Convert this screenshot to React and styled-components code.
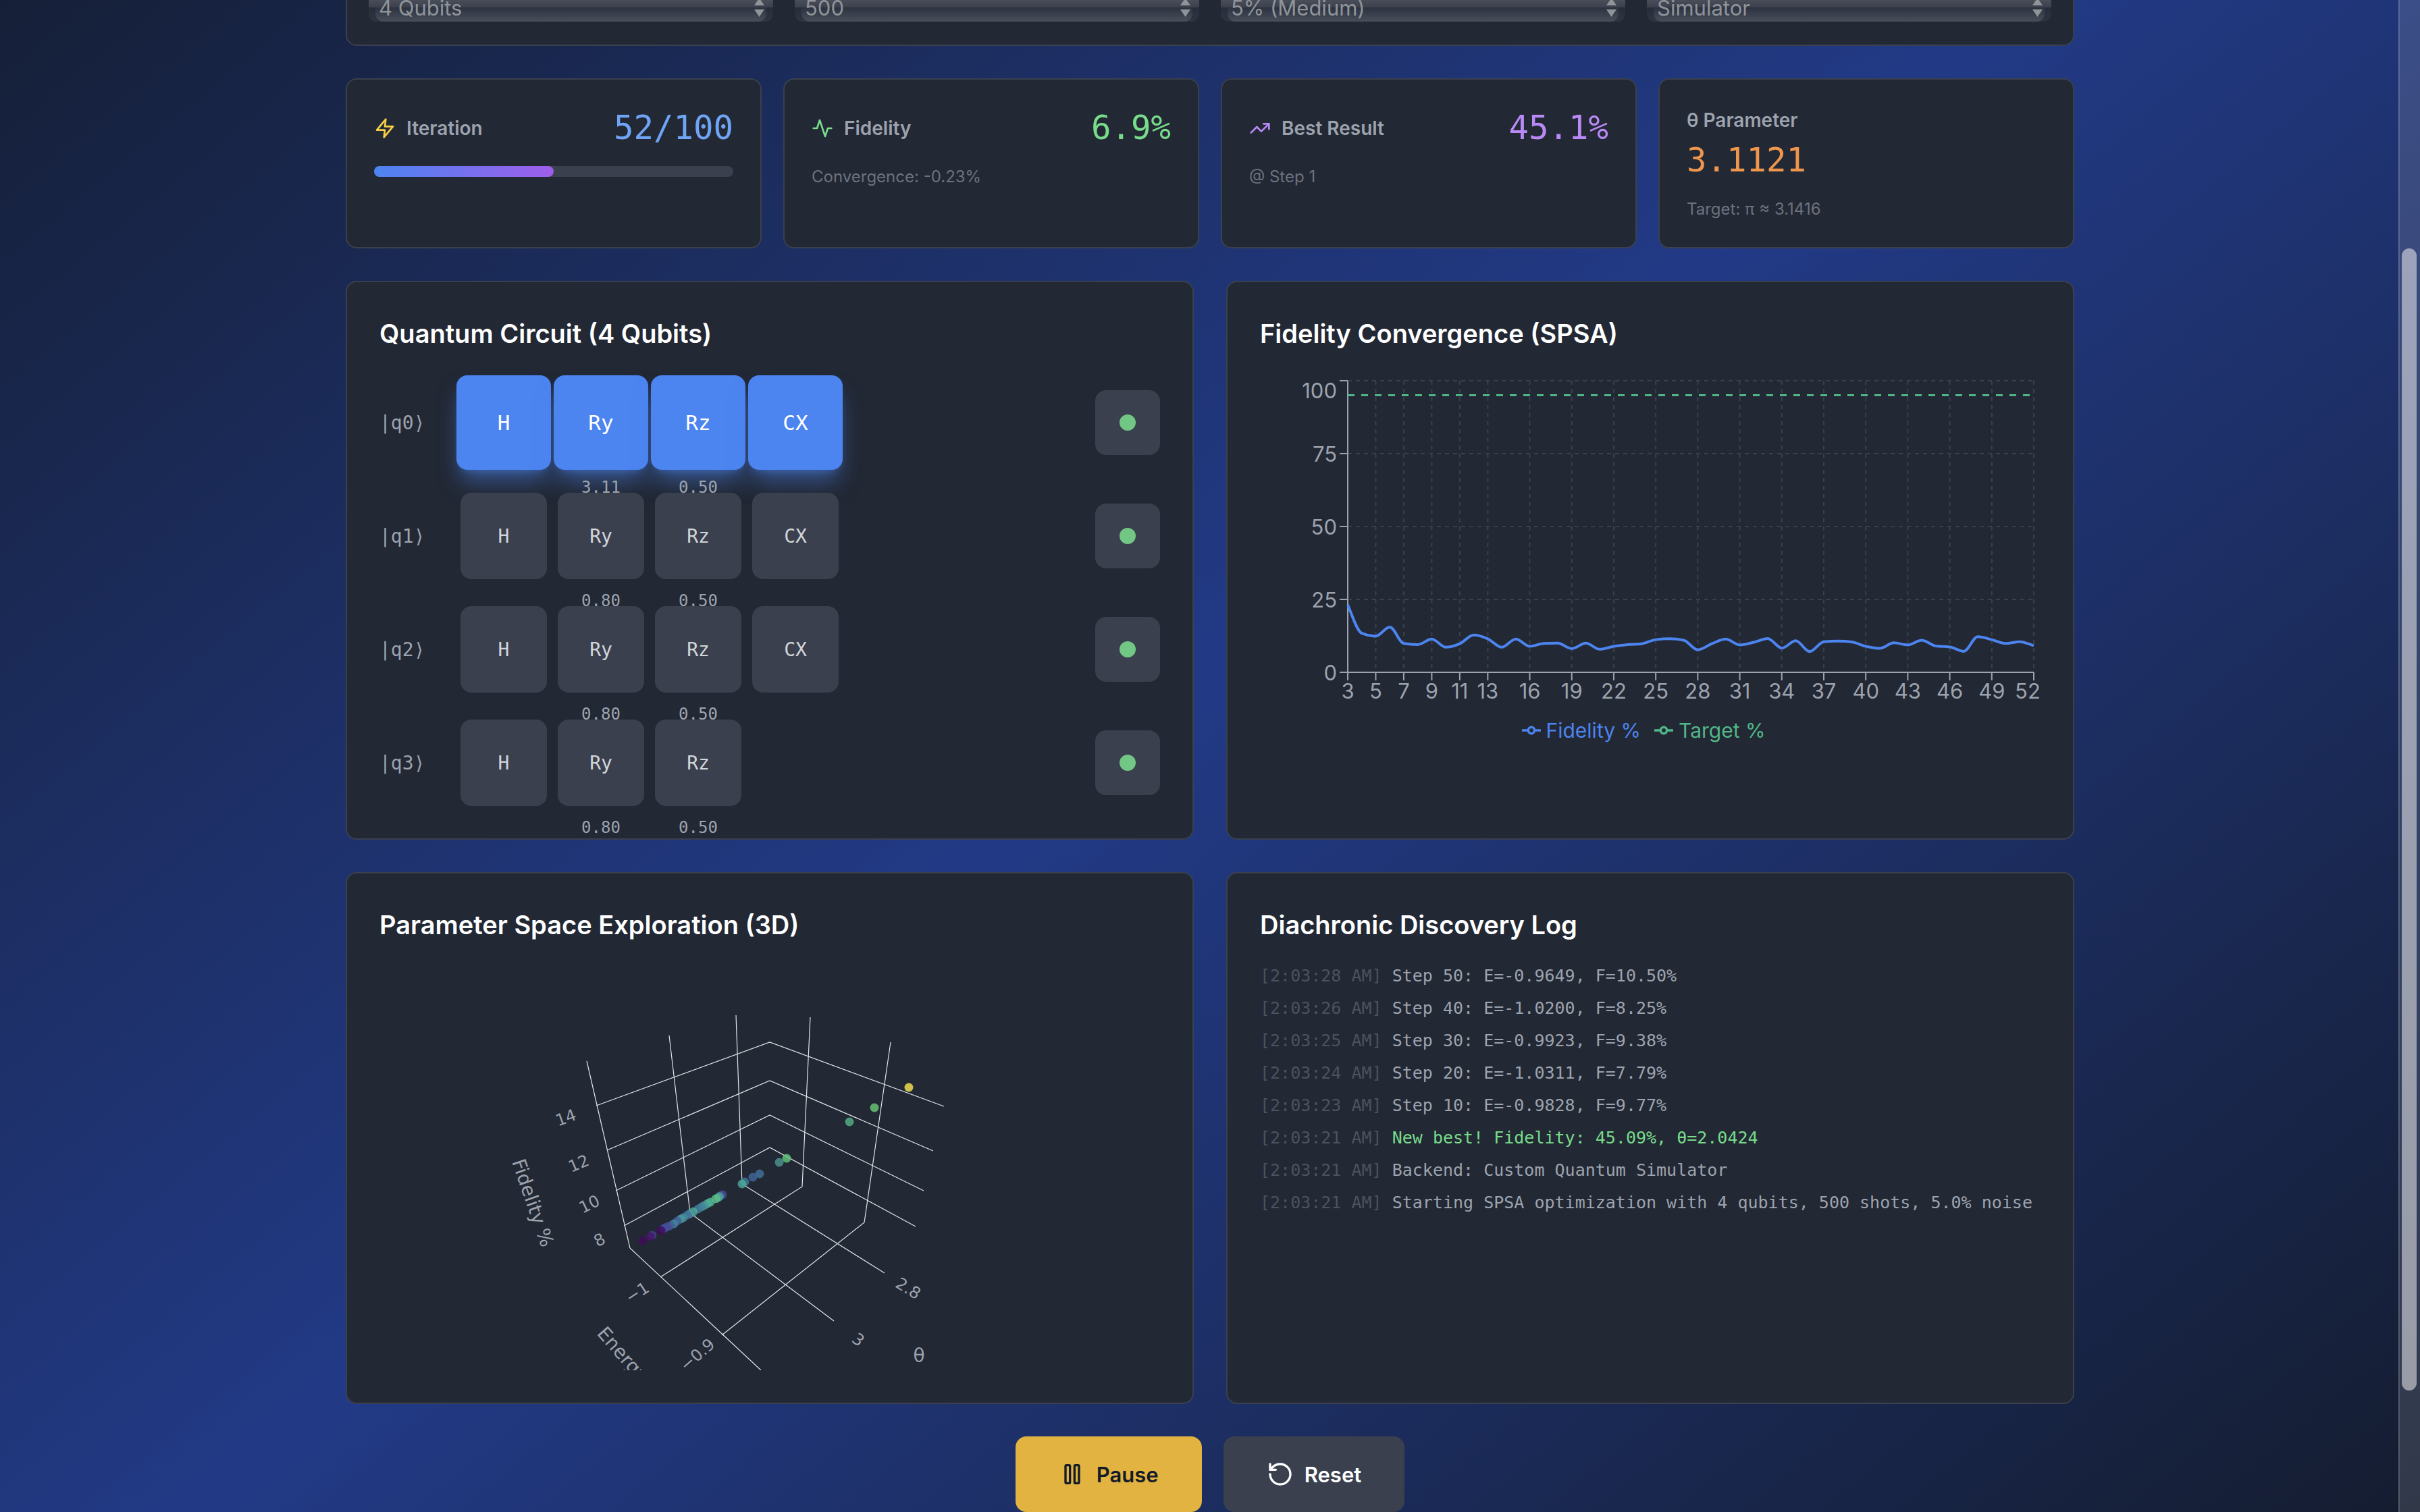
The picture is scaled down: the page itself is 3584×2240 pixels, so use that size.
import React, { useState } from "react";

import styled, { createGlobalStyle } from "styled-components";

const sans = `Inter, "Liberation Sans", sans-serif`;
const mono = `"DejaVu Sans Mono", "Liberation Mono", monospace`;

const GlobalStyle = createGlobalStyle`
  * {
    box-sizing: border-box;
  }

  body {
    margin: 0;
    font-family: ${sans};
    background: #131a2a;
  }
`;

const Page = styled.div`
  min-height: 100vh;
  overflow: hidden;
  background: linear-gradient(to bottom right, #131a28, #223a86, #131a28) 0 -490px / 100% 2966px no-repeat;
`;

const Main = styled.main`
  display: flex;
  flex-direction: column;
  gap: 48px;
  max-width: 2560px;
  margin: -46px auto 0;
`;

const Card = styled.section`
  border: 2px solid #3a404d;
  border-radius: 16px;
  background: #222834;
`;

const ConfigCard = styled(Card)`
  display: grid;
  grid-template-columns: repeat(4, 1fr);
  gap: 32px;
  padding: 34px 32px;
`;

const SelectFrame = styled.div`
  position: relative;
  height: 42px;
  padding: 0 10px;
  border-radius: 12px;
  background: linear-gradient(#555a65, #3b404c 50%, #262c39 50%, #2f3542);
`;

const Select = styled.select`
  appearance: none;
  display: block;
  width: 100%;
  height: 42px;
  padding: 0 5px;
  border: none;
  border-radius: 0 0 12px 12px;
  background: linear-gradient(#2b3240, #4a4f5a) bottom / 100% 21px no-repeat;
  color: #8f9499;
  font-family: ${sans};
  font-size: 31px;
`;

const SelectArrows = styled.svg`
  position: absolute;
  top: 6px;
  right: 13px;
  pointer-events: none;
`;

const StatGrid = styled.div`
  display: grid;
  grid-template-columns: repeat(4, 1fr);
  gap: 32px;
`;

const StatCard = styled(Card)`
  padding: 40px;
`;

const StatHeader = styled.div`
  display: flex;
  align-items: center;
  justify-content: space-between;
`;

const StatName = styled.div`
  display: flex;
  align-items: center;
  gap: 16px;
`;

const StatLabel = styled.span`
  color: #9da3ae;
  font-size: 28px;
  font-weight: 600;
  line-height: 40px;
`;

const StatValue = styled.div`
  margin-top: ${(props) => (props.$below ? "8px" : "0")};
  color: ${(props) => props.$color};
  font-family: ${mono};
  font-size: 49px;
  line-height: 64px;
`;

const StatNote = styled.div`
  margin-top: 24px;
  color: #6d727f;
  font-size: 24px;
  line-height: 32px;
`;

const ProgressTrack = styled.div`
  height: 16px;
  margin-top: 24px;
  border-radius: 8px;
  background: #3a404e;
`;

const ProgressFill = styled.div`
  height: 100%;
  border-radius: 8px;
  background: linear-gradient(to right, #4c84f0, #9f5eec);
`;

const PanelGrid = styled.div`
  display: grid;
  grid-template-columns: repeat(2, 1fr);
  gap: 48px;
`;

const Panel = styled(Card)`
  padding: 48px;
`;

const PanelTitle = styled.h2`
  margin: 0 0 32px;
  color: #ffffff;
  font-size: 38px;
  font-weight: 600;
  line-height: 56px;
`;

const Circuit = styled.div`
  display: flex;
  flex-direction: column;
  gap: 40px;
  padding-top: 8px;
`;

const QubitRow = styled.div`
  display: flex;
  align-items: center;
  height: 128px;
`;

const QubitName = styled.span`
  width: 120px;
  color: #9da3ae;
  font-family: ${mono};
  font-size: 28px;
`;

const GateList = styled.div`
  display: flex;
  flex: 1;
  gap: 16px;
`;

const GateSlot = styled.div`
  position: relative;
  width: 128px;
  height: 128px;
`;

const Gate = styled.div`
  display: flex;
  align-items: center;
  justify-content: center;
  width: ${(props) => (props.$active ? "140px" : "128px")};
  height: ${(props) => (props.$active ? "140px" : "128px")};
  margin: ${(props) => (props.$active ? "-6px" : "0")};
  border-radius: 16px;
  background: ${(props) => (props.$active ? "#4c84f0" : "#3a404e")};
  box-shadow: ${(props) =>
    props.$active
      ? "0 22px 33px -6px rgba(76, 132, 240, 0.5), 0 8px 13px -8px rgba(76, 132, 240, 0.5)"
      : "none"};
  color: ${(props) => (props.$active ? "#ffffff" : "#d2d5da")};
  font-family: ${mono};
  font-size: ${(props) => (props.$active ? "31px" : "28px")};
`;

const GateAngle = styled.span`
  position: absolute;
  bottom: -48px;
  left: 0;
  width: 100%;
  color: #9da3ae;
  font-family: ${mono};
  font-size: 24px;
  line-height: 32px;
  text-align: center;
`;

const Measure = styled.div`
  display: flex;
  align-items: center;
  justify-content: center;
  width: 96px;
  height: 96px;
  border-radius: 16px;
  background: #3a404e;
`;

const MeasureDot = styled.span`
  width: 24px;
  height: 24px;
  border-radius: 50%;
  background: #72c784;
`;

const Drawing = styled.svg`
  display: block;
  width: 100%;
  height: auto;
`;

const Legend = styled.ul`
  display: flex;
  justify-content: center;
  gap: 20px;
  margin: 0;
  padding: 2px 30px 0 10px;
  list-style: none;
`;

const LegendItem = styled.li`
  display: flex;
  align-items: center;
  gap: 8px;
  color: ${(props) => props.$color};
  font-size: 30px;
  line-height: 48px;
`;

const LogList = styled.ul`
  display: flex;
  flex-direction: column;
  gap: 16px;
  margin: 0;
  padding: 0;
  list-style: none;
`;

const LogLine = styled.li`
  color: ${(props) => (props.$best ? "#78dc8a" : "#9da3ae")};
  font-family: ${mono};
  font-size: 25px;
  line-height: 32px;
`;

const LogTime = styled.span`
  color: #4d525e;
`;

const Actions = styled.div`
  display: flex;
  justify-content: center;
  gap: 32px;
`;

const ActionButton = styled.button`
  display: flex;
  align-items: center;
  gap: 16px;
  height: 112px;
  padding: 0 64px;
  border: none;
  border-radius: 16px;
  background: ${(props) => (props.$primary ? "#e2b340" : "#3a404e")};
  color: ${(props) => (props.$primary ? "#131a28" : "#ffffff")};
  font-family: ${sans};
  font-size: 31px;
  font-weight: 600;
  cursor: pointer;
`;

const ScrollTrack = styled.div`
  position: fixed;
  top: 0;
  right: 0;
  bottom: 0;
  width: 32px;
  padding: 368px 5px 180px 3px;
  border-left: 2px solid rgba(255, 255, 255, 0.16);
  background: rgba(250, 250, 250, 0.13);
`;

const ScrollThumb = styled.div`
  height: 100%;
  border-radius: 11px;
  background: rgba(223, 223, 228, 0.6);
`;

const settings = [
  { name: "Qubits", value: "4 Qubits" },
  { name: "Shots", value: "500" },
  { name: "Noise", value: "5% (Medium)" },
  { name: "Backend", value: "Simulator" },
];

const qubits = [
  { name: "|q0⟩", gates: ["H", "Ry", "Rz", "CX"], angle: "3.11", active: true },
  { name: "|q1⟩", gates: ["H", "Ry", "Rz", "CX"], angle: "0.80" },
  { name: "|q2⟩", gates: ["H", "Ry", "Rz", "CX"], angle: "0.80" },
  { name: "|q3⟩", gates: ["H", "Ry", "Rz"], angle: "0.80" },
];

const logs = [
  { time: "2:03:28 AM", text: "Step 50: E=-0.9649, F=10.50%" },
  { time: "2:03:26 AM", text: "Step 40: E=-1.0200, F=8.25%" },
  { time: "2:03:25 AM", text: "Step 30: E=-0.9923, F=9.38%" },
  { time: "2:03:24 AM", text: "Step 20: E=-1.0311, F=7.79%" },
  { time: "2:03:23 AM", text: "Step 10: E=-0.9828, F=9.77%" },
  { time: "2:03:21 AM", text: "New best! Fidelity: 45.09%, θ=2.0424", best: true },
  { time: "2:03:21 AM", text: "Backend: Custom Quantum Simulator" },
  { time: "2:03:21 AM", text: "Starting SPSA optimization with 4 qubits, 500 shots, 5.0% noise" },
];

// fidelity in percent, one value per step, starting at step 3
const fidelity = [
  23.2, 13.4, 12.4, 15.5, 9.9, 9.5, 11.4, 8.6, 9.8, 12.8,
  11.5, 8.6, 11.4, 8.9, 9.9, 10.0, 8.1, 10.0, 7.9, 8.9,
  9.5, 9.8, 11.2, 11.5, 11.0, 7.7, 9.8, 11.4, 9.4, 10.3,
  11.6, 8.3, 10.8, 7.1, 10.5, 10.7, 10.4, 8.9, 8.2, 10.1,
  9.4, 11.0, 9.0, 8.7, 7.2, 12.2, 11.2, 9.9, 10.5, 9.1,
];

const stepTicks = [3, 5, 7, 9, 11, 13, 16, 19, 22, 25, 28, 31, 34, 37, 40, 43, 46, 49, 52];
const percentTicks = [0, 25, 50, 75, 100];

const chart = { left: 130, right: 1146, top: 10, bottom: 442 };

const stepX = (step) => chart.left + ((step - 3) / 49) * (chart.right - chart.left);
const percentY = (value) => chart.bottom - (value / 100) * (chart.bottom - chart.top);

// monotone cubic through all points, flat at every local extreme
const monotonePath = (points) => {
  const slopes = points.slice(1).map(([x, y], i) => (y - points[i][1]) / (x - points[i][0]));
  const tangents = points.map((_, i) => {
    if (i === 0) return slopes[0] * 1.2;
    if (i === points.length - 1) return slopes[i - 1] * 1.2;
    const a = slopes[i - 1];
    const b = slopes[i];
    if (a * b <= 0) return 0;
    return Math.sign(a) * 2 * Math.min(Math.abs(a), Math.abs(b), Math.abs(a + b) / 4);
  });
  return points.reduce((d, [x, y], i) => {
    if (i === 0) return `M${x},${y}`;
    const [px, py] = points[i - 1];
    const h = (x - px) / 3;
    return `${d}C${px + h},${py + h * tangents[i - 1]},${x - h},${y - h * tangents[i]},${x},${y}`;
  }, "");
};

const gridLines3d = [
  "307,142 371,419 565,600",
  "429,104 460,367 673,527",
  "528,74 537,324 748,456",
  "638,77 626,328 416,462",
  "757,114 718,381 507,548",
  "321,208 578,114 836,209",
  "337,274 578,171 820,275",
  "350,334 578,222 806,334",
  "362,386 578,270 794,387",
];

const labels3d = [
  { text: "14", x: 276, y: 226, angle: -20 },
  { text: "12", x: 295, y: 294, angle: -23 },
  { text: "10", x: 311, y: 354, angle: -26 },
  { text: "8", x: 326, y: 407, angle: -28 },
  { text: "−1", x: 382, y: 485, angle: -33 },
  { text: "−0.9", x: 471, y: 577, angle: -41 },
  { text: "3", x: 709, y: 555, angle: 37 },
  { text: "2.8", x: 783, y: 479, angle: 32 },
];

const samples3d = [
  [784, 181, "#fbe751"],
  [733, 211, "#6dca78"],
  [696, 232, "#57b388"],
  [592, 292, "#4d9791"],
  [603, 286, "#64c97a"],
  [563, 309, "#42739c"],
  [553, 314, "#41669c"],
  [541, 321, "#417b9d"],
  [537, 324, "#4dac9c"],
  [508, 340, "#4c4b98"],
  [504, 342, "#4a84a0"],
  [502, 344, "#4fac92"],
  [498, 346, "#5cc08a"],
  [490, 351, "#55b892"],
  [486, 353, "#52b096"],
  [481, 356, "#4a9a9c"],
  [477, 358, "#45869d"],
  [472, 361, "#447a9d"],
  [465, 365, "#4dab9b"],
  [460, 368, "#4b9b9c"],
  [456, 370, "#43709e"],
  [450, 374, "#45909c"],
  [446, 376, "#4a9a9b"],
  [441, 379, "#465f9f"],
  [436, 383, "#43879d"],
  [430, 386, "#46599e"],
  [425, 388, "#4c4b99"],
  [421, 390, "#43509c"],
  [417, 393, "#440a5e"],
  [404, 400, "#46408c"],
  [401, 402, "#471468"],
  [390, 408, "#430b5c"],
];

const Icon = ({ size, color = "currentColor", children }) => (
  <svg
    width={size}
    height={size}
    viewBox="0 0 24 24"
    fill="none"
    stroke={color}
    strokeWidth="2"
    strokeLinecap="round"
    strokeLinejoin="round"
    aria-hidden="true"
  >
    {children}
  </svg>
);

const ConvergenceChart = () => {
  const points = fidelity.map((value, index) => [stepX(index + 3), percentY(value)]);

  return (
    <Drawing viewBox="0 0 1156 502" fontFamily={sans} fontSize="31" fill="#9da3ae">
      <g stroke="#3a404e" strokeWidth="2" strokeDasharray="6 6">
        {percentTicks.map((tick) => (
          <path key={tick} d={`M${chart.left},${percentY(tick)}H${chart.right}`} />
        ))}
        {stepTicks.map((tick) => (
          <path key={tick} d={`M${stepX(tick)},${chart.top}V${chart.bottom}`} />
        ))}
      </g>
      <g stroke="#9da3ae" strokeWidth="2" fill="none">
        <path d={`M${chart.left},${chart.top}V${chart.bottom}H${chart.right}`} />
        {percentTicks.map((tick) => (
          <path key={tick} d={`M${chart.left - 12},${percentY(tick)}h12`} />
        ))}
        {stepTicks.map((tick) => (
          <path key={tick} d={`M${stepX(tick)},${chart.bottom}v12`} />
        ))}
      </g>
      {percentTicks.map((tick) => (
        <text key={tick} x={chart.left - 16} y={tick === 100 ? 36 : percentY(tick) + 12} textAnchor="end">
          {tick}
        </text>
      ))}
      {stepTicks.map((tick) => (
        <text key={tick} x={tick === 52 ? 1137 : stepX(tick)} y="481" textAnchor="middle">
          {tick}
        </text>
      ))}
      <path d={monotonePath(points)} fill="none" stroke="#4c84f0" strokeWidth="4" />
      <path
        d={`M${chart.left},${percentY(95)}H${chart.right}`}
        stroke="#52b788"
        strokeWidth="3"
        strokeDasharray="10 10"
      />
    </Drawing>
  );
};

const LegendMark = () => (
  <svg width="28" height="28" viewBox="0 0 32 32" fill="none" stroke="currentColor" strokeWidth="4">
    <path d="M0,16h10.667A5.333,5.333,0,1,1,21.333,16H32M21.333,16A5.333,5.333,0,1,1,10.667,16" />
  </svg>
);

const ParameterSpace = () => (
  <Drawing viewBox="0 0 1156 600" fontFamily={`"DejaVu Sans", sans-serif`} fontSize="24" fill="#9da3ae">
    <g fill="none" stroke="#e4e6ea" strokeWidth="1.2">
      {gridLines3d.map((line) => (
        <polyline key={line} points={line} />
      ))}
    </g>
    {samples3d.map(([x, y, color]) => (
      <circle key={`${x}-${y}`} cx={x} cy={y} r="6.5" fill={color} opacity="0.8" />
    ))}
    {labels3d.map(({ text, x, y, angle }) => (
      <text
        key={text}
        textAnchor="middle"
        dominantBaseline="central"
        transform={`translate(${x} ${y}) rotate(${angle})`}
      >
        {text}
      </text>
    ))}
    <g fontSize="28">
      <text textAnchor="middle" dominantBaseline="central" transform="translate(227 352) rotate(71)">
        Fidelity %
      </text>
      <text transform="translate(321 546) rotate(49)">Energy</text>
      <text textAnchor="middle" dominantBaseline="central" x="799" y="578">
        θ
      </text>
    </g>
  </Drawing>
);

const App = () => {
  const [running, setRunning] = useState(true);

  return (
    <Page>
      <GlobalStyle />
      <Main>
        <ConfigCard>
          {settings.map(({ name, value }) => (
            <SelectFrame key={name}>
              <Select aria-label={name} defaultValue={value}>
                <option>{value}</option>
              </Select>
              <SelectArrows width="15" height="30" viewBox="0 0 15 30" fill="#8f9499" aria-hidden="true">
                <path d="M7.500 1L15 12H0ZM0 18H15L7.500 29Z" />
              </SelectArrows>
            </SelectFrame>
          ))}
        </ConfigCard>

        <StatGrid>
          <StatCard>
            <StatHeader>
              <StatName>
                <Icon size={32} color="#f6cf46">
                  <polygon points="13 2 3 14 12 14 11 22 21 10 12 10 13 2" />
                </Icon>
                <StatLabel>Iteration</StatLabel>
              </StatName>
              <StatValue $color="#70a4f4">52/100</StatValue>
            </StatHeader>
            <ProgressTrack role="progressbar" aria-valuenow={52} aria-valuemax={100} aria-label="Iteration">
              <ProgressFill style={{ width: "50%" }} />
            </ProgressTrack>
          </StatCard>

          <StatCard>
            <StatHeader>
              <StatName>
                <Icon size={32} color="#78dc8a">
                  <polyline points="22 12 18 12 15 21 9 3 6 12 2 12" />
                </Icon>
                <StatLabel>Fidelity</StatLabel>
              </StatName>
              <StatValue $color="#78dc8a">6.9%</StatValue>
            </StatHeader>
            <StatNote>Convergence: -0.23%</StatNote>
          </StatCard>

          <StatCard>
            <StatHeader>
              <StatName>
                <Icon size={32} color="#b989f6">
                  <polyline points="22 7 13.5 15.5 8.5 10.5 2 17" />
                  <polyline points="16 7 22 7 22 13" />
                </Icon>
                <StatLabel>Best Result</StatLabel>
              </StatName>
              <StatValue $color="#b989f6">45.1%</StatValue>
            </StatHeader>
            <StatNote>@ Step 1</StatNote>
          </StatCard>

          <StatCard>
            <StatName>
              <StatLabel>θ Parameter</StatLabel>
            </StatName>
            <StatValue $color="#ee964d" $below>
              3.1121
            </StatValue>
            <StatNote>Target: π ≈ 3.1416</StatNote>
          </StatCard>
        </StatGrid>

        <PanelGrid>
          <Panel>
            <PanelTitle>Quantum Circuit (4 Qubits)</PanelTitle>
            <Circuit>
              {qubits.map(({ name, gates, angle, active }) => (
                <QubitRow key={name}>
                  <QubitName>{name}</QubitName>
                  <GateList>
                    {gates.map((gate) => (
                      <GateSlot key={gate}>
                        <Gate $active={active}>{gate}</Gate>
                        {gate === "Ry" && <GateAngle>{angle}</GateAngle>}
                        {gate === "Rz" && <GateAngle>0.50</GateAngle>}
                      </GateSlot>
                    ))}
                  </GateList>
                  <Measure>
                    <MeasureDot />
                  </Measure>
                </QubitRow>
              ))}
            </Circuit>
          </Panel>

          <Panel>
            <PanelTitle>Fidelity Convergence (SPSA)</PanelTitle>
            <ConvergenceChart />
            <Legend>
              <LegendItem $color="#4c84f0">
                <LegendMark />
                Fidelity %
              </LegendItem>
              <LegendItem $color="#52b788">
                <LegendMark />
                Target %
              </LegendItem>
            </Legend>
          </Panel>

          <Panel>
            <PanelTitle>Parameter Space Exploration (3D)</PanelTitle>
            <ParameterSpace />
          </Panel>

          <Panel>
            <PanelTitle>Diachronic Discovery Log</PanelTitle>
            <LogList>
              {logs.map(({ time, text, best }) => (
                <LogLine key={text} $best={best}>
                  <LogTime>[{time}]</LogTime> {text}
                </LogLine>
              ))}
            </LogList>
          </Panel>
        </PanelGrid>

        <Actions>
          <ActionButton type="button" $primary onClick={() => setRunning(!running)}>
            <Icon size={40}>
              {running ? (
                <>
                  <rect x="6" y="4" width="4" height="16" rx="1" />
                  <rect x="14" y="4" width="4" height="16" rx="1" />
                </>
              ) : (
                <polygon points="6 3 20 12 6 21 6 3" />
              )}
            </Icon>
            {running ? "Pause" : "Start"}
          </ActionButton>
          <ActionButton type="button" onClick={() => setRunning(true)}>
            <Icon size={40}>
              <path d="M3 12a9 9 0 1 0 9-9 9.750 9.750 0 0 0-6.740 2.740L3 8" />
              <path d="M3 3v5h5" />
            </Icon>
            Reset
          </ActionButton>
        </Actions>
      </Main>

      <ScrollTrack aria-hidden="true">
        <ScrollThumb />
      </ScrollTrack>
    </Page>
  );
};

export default App;
